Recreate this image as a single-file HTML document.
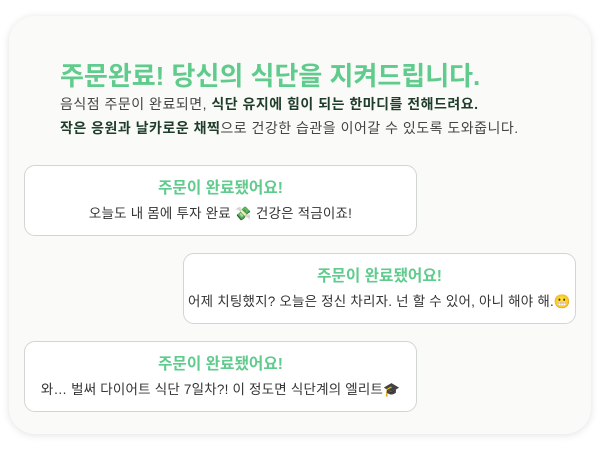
<!DOCTYPE html>
<html><head><meta charset="utf-8"><style>
*{margin:0;padding:0;box-sizing:border-box}
body{width:600px;height:450px;background:#fff;font-family:"Liberation Sans","Noto Sans CJK KR",sans-serif;position:relative;overflow:hidden}
.card{position:absolute;left:9px;top:16px;width:582px;height:418px;background:#fafaf8;border-radius:26px;box-shadow:0 1px 8px rgba(0,0,0,0.12)}
h1{position:absolute;left:60px;top:56px;font-size:26px;font-weight:700;color:#5fcb8c;letter-spacing:0;white-space:nowrap}
.sub{position:absolute;left:60px;font-size:14px;color:#444;white-space:nowrap;letter-spacing:0.5px}
.sub b{color:#1f3d2a}
.b{position:absolute;width:393px;height:71px;background:#fff;border:1px solid #d2d6d3;border-radius:11px;text-align:center}
.b .t{margin-top:13px;font-size:15.7px;font-weight:700;color:#5fcb8c;line-height:20px}
.b .m{margin-top:6px;font-size:13.5px;color:#333;line-height:18px;white-space:nowrap;letter-spacing:0.2px}
</style></head><body>
<div class="card"></div>
<h1>주문완료! 당신의 식단을 지켜드립니다.</h1>
<div class="sub" style="top:94px">음식점 주문이 완료되면, <b>식단 유지에 힘이 되는 한마디를 전해드려요.</b></div>
<div class="sub" style="top:118px"><b>작은 응원과 날카로운 채찍</b>으로 건강한 습관을 이어갈 수 있도록 도와줍니다.</div>
<div class="b" style="left:24px;top:165px"><div class="t">주문이 완료됐어요!</div><div class="m">오늘도 내 몸에 투자 완료 💸 건강은 적금이죠!</div></div>
<div class="b" style="left:183px;top:253px"><div class="t">주문이 완료됐어요!</div><div class="m">어제 치팅했지? 오늘은 정신 차리자. 넌 할 수 있어, 아니 해야 해.😬</div></div>
<div class="b" style="left:24px;top:341px"><div class="t">주문이 완료됐어요!</div><div class="m">와… 벌써 다이어트 식단 7일차?! 이 정도면 식단계의 엘리트🎓</div></div>
</body></html>
